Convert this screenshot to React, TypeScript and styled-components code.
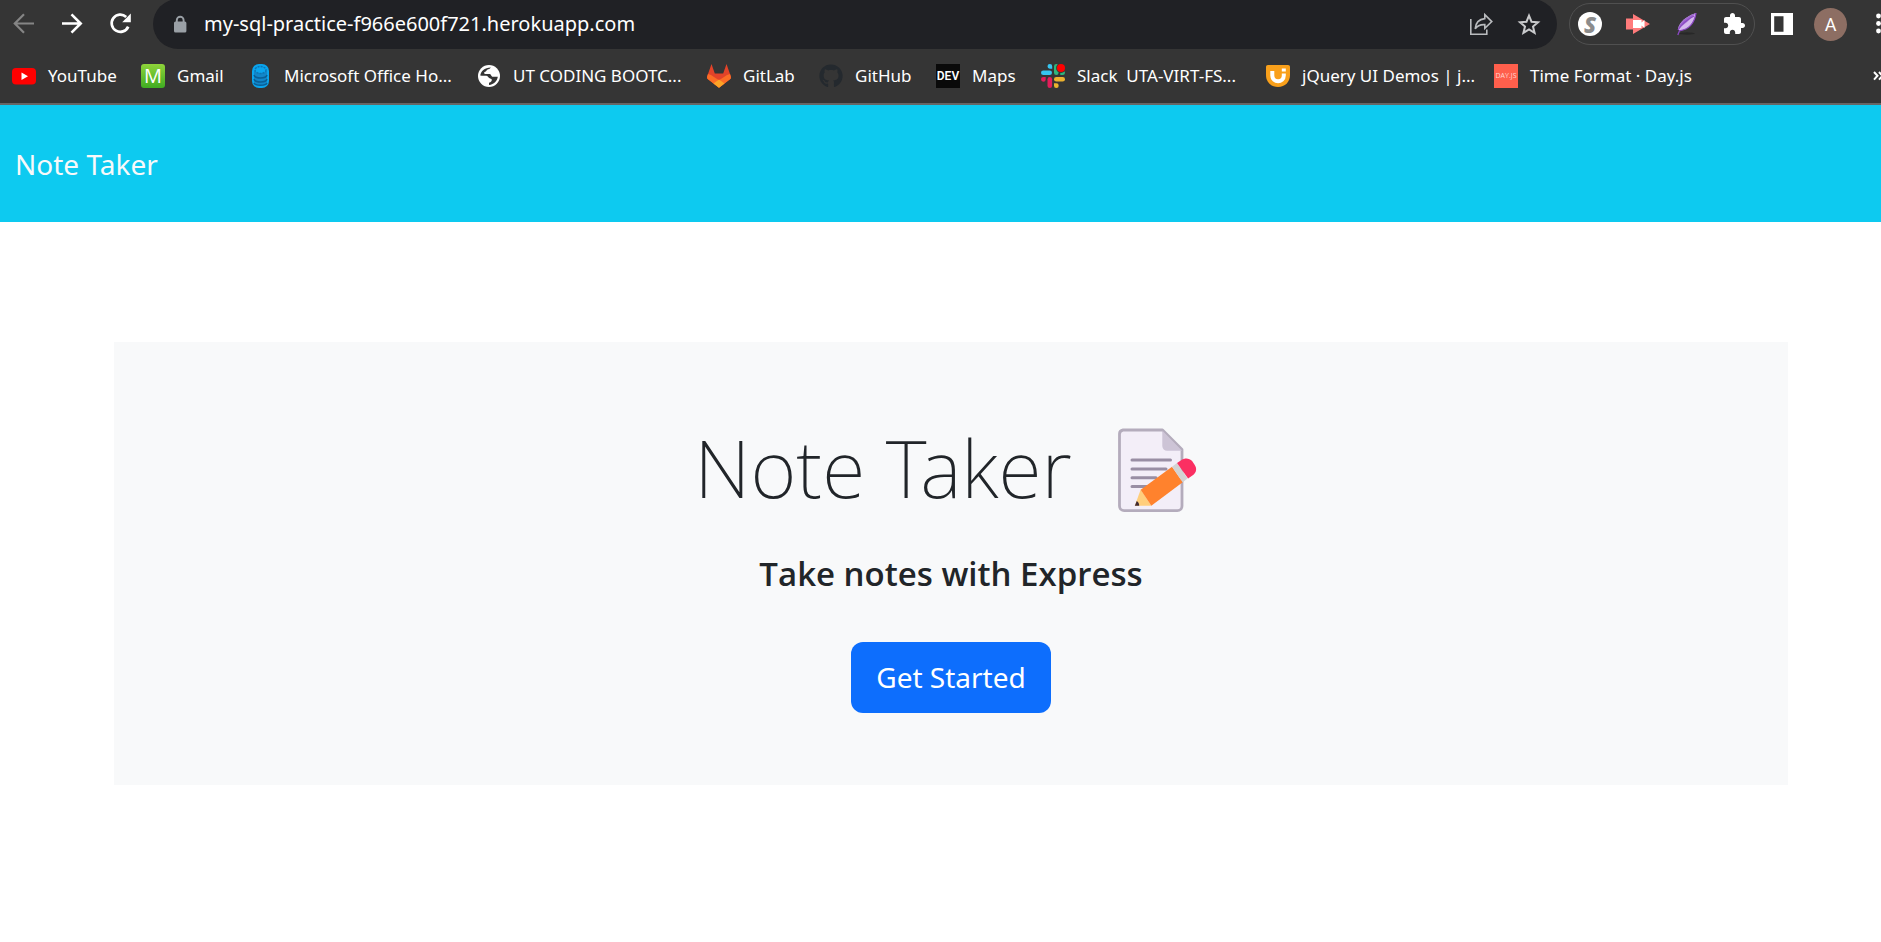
import React from 'react';
import styled, { createGlobalStyle } from 'styled-components';
import { FaGithub } from 'react-icons/fa';

const GlobalStyle = createGlobalStyle`
  *, *::before, *::after { box-sizing: border-box; }
  body {
    margin: 0;
    background: #fff;
    color: #212529;
    font-family: 'Noto Sans', 'Open Sans', sans-serif;
    overflow-x: hidden;
  }
  h1, h2, ul { margin: 0; padding: 0; }
  svg { display: block; }
`;

/* ---------- browser chrome ---------- */

const Chrome = styled.header`
  background: #353535;
  border-bottom: 2px solid #666;
  color: #fff;
  overflow: hidden;
`;

const Toolbar = styled.div`
  display: flex;
  align-items: center;
  height: 48px;
  padding-left: 12px;
`;

const IconButton = styled.button<{ $color?: string }>`
  flex: none;
  width: 24px;
  height: 24px;
  padding: 0;
  border: 0;
  background: none;
  color: ${(p) => p.$color ?? '#fff'};
  cursor: pointer;
`;

const NavButtons = styled.div`
  display: flex;
  flex: none;
  gap: 24px;
  margin-right: 21px;
`;

const AddressBar = styled.div`
  display: flex;
  flex: 1;
  align-items: center;
  min-width: 0;
  height: 50px;
  margin-right: 12px;
  padding: 0 16px 0 15px;
  border-radius: 25px;
  background: #202125;
`;

const UrlInput = styled.input`
  flex: 1;
  min-width: 0;
  margin: 0 12px;
  padding: 0;
  border: 0;
  outline: 0;
  background: none;
  color: #fff;
  font: 400 20px/28px 'Noto Sans', sans-serif;
`;

const AddressActions = styled.div`
  display: flex;
  gap: 24px;
`;

const Extensions = styled.div`
  display: flex;
  flex: none;
  align-items: center;
  gap: 24px;
  height: 42px;
  margin-right: 15px;
  padding: 0 8px;
  border: 1px solid #505050;
  border-radius: 21px;
`;

const Avatar = styled.button`
  flex: none;
  width: 33px;
  height: 33px;
  margin: 0 26px 0 20px;
  padding: 0;
  border: 0;
  border-radius: 50%;
  background: #8d6e63;
  color: #fff;
  font: 400 18px/33px Roboto, sans-serif;
`;

const MenuButton = styled.button`
  flex: none;
  width: 8px;
  height: 24px;
  padding: 0;
  border: 0;
  background: none;
  color: #fff;
`;

const BookmarkBar = styled.nav`
  display: flex;
  align-items: center;
  justify-content: space-between;
  height: 55px;
  padding-left: 12px;
`;

const BookmarkList = styled.ul`
  display: flex;
  flex: 1;
  gap: 24px;
  min-width: 0;
  list-style: none;
`;

const Bookmark = styled.a`
  display: flex;
  align-items: center;
  gap: 12px;
  color: #fff;
  font-size: 17px;
  line-height: 24px;
  text-decoration: none;
  white-space: pre;
`;

const BookmarkLabel = styled.span<{ $width: number }>`
  width: ${(p) => p.$width}px;
`;

const MoreButton = styled.button`
  flex: none;
  width: 8px;
  height: 32px;
  padding: 0;
  border: 0;
  background: none;
  color: #fff;
`;

const Tile = styled.span<{ $bg: string; $size: number; $weight?: number; $round?: number; $color?: string }>`
  display: flex;
  align-items: center;
  justify-content: center;
  flex: none;
  width: 24px;
  height: 24px;
  border-radius: ${(p) => p.$round ?? 0}px;
  background: ${(p) => p.$bg};
  color: ${(p) => p.$color ?? '#fff'};
  font: ${(p) => p.$weight ?? 400} ${(p) => p.$size}px/24px 'Open Sans', sans-serif;
`;

const DevTile = styled(Tile)`
  font-family: Roboto, sans-serif;
`;

const StreamTile = styled(Tile)`
  font-style: italic;
`;

/* ---------- page ---------- */

const Navbar = styled.nav`
  display: flex;
  align-items: center;
  height: 117px;
  padding: 0 15px;
  background: #0dcaf0;
`;

const Brand = styled.a`
  color: #f8f9fa;
  font-size: 28px;
  line-height: 40px;
  text-decoration: none;
`;

const Main = styled.main`
  padding: 120px 93px 0 114px;
`;

const Hero = styled.section`
  display: flex;
  flex-direction: column;
  align-items: center;
  padding: 72px 24px;
  background: #f8f9fa;
`;

const Title = styled.h1`
  display: flex;
  align-items: flex-end;
  gap: 36px;
  margin-bottom: 30px;
  font-size: 79px;
  font-weight: 200;
  line-height: 108px;
  white-space: nowrap;
`;

const Subtitle = styled.h2`
  margin-bottom: 46px;
  font: 600 33px/44px 'Open Sans', sans-serif;
`;

const StartButton = styled.button`
  padding: 15px 25px 16px;
  border: 0;
  border-radius: 12px;
  background: #0d6efd;
  color: #fff;
  font: 400 28px/40px 'Noto Sans', sans-serif;
  cursor: pointer;
`;

/* ---------- drawings ---------- */

const Glyph = ({ d }: { d: string }) => (
  <svg width="24" height="24" viewBox="0 0 24 24" fill="currentColor" aria-hidden="true">
    <path d={d} />
  </svg>
);

const BackIcon = () => (
  <svg width="24" height="24" viewBox="0 0 24 24" fill="none" stroke="currentColor" strokeWidth="2.2" aria-hidden="true">
    <path d="M22 11.500H3.500M12 2.300L2.800 11.500l9.200 9.200" />
  </svg>
);
const ForwardIcon = () => (
  <svg width="24" height="24" viewBox="0 0 24 24" fill="none" stroke="currentColor" strokeWidth="2.6" aria-hidden="true">
    <path d="M2 11.500h18M11.5 2.300l9.200 9.200-9.200 9.200" />
  </svg>
);
const ReloadIcon = () => (
  <svg width="24" height="24" viewBox="0 0 24 24" fill="none" aria-hidden="true">
    <path d="M20.2 14.6A8.6 8.6 0 1 1 18.2 5" stroke="currentColor" strokeWidth="2.7" />
    <path d="M22.8 1.6v8.6h-8.6z" fill="currentColor" />
  </svg>
);
const LockIcon = () => (
  <svg width="24" height="24" viewBox="0 0 24 24" aria-hidden="true">
    <rect x="6" y="9.500" width="12.4" height="11" rx="1.5" fill="#9aa0a6" />
    <path d="M8.8 10V8.100a3.400 3.400 0 0 1 6.800 0V10" fill="none" stroke="#9aa0a6" strokeWidth="1.9" />
  </svg>
);
const ShareIcon = () => (
  <svg width="24" height="24" viewBox="0 0 24 24" fill="none" stroke="#b9bbbe" strokeWidth="1.6" aria-hidden="true">
    <path d="M1.8 7v15.200h16V17.400" />
    <path d="M15.800 2.600l7 7-7 6.800v-3.800c-4.300-.2-7.600 1-9.600 4.200.4-5.900 4-9.600 9.600-10.200z" />
  </svg>
);
const StarIcon = () => (
  <svg width="24" height="24" viewBox="0 0 24 24" fill="none" stroke="#c9cacc" strokeWidth="2" aria-hidden="true">
    <path d="M12 3.700l2.500 6 6.500.5-5 4.300 1.600 6.400-5.600-3.400-5.600 3.400L8 14.500l-5-4.300 6.500-.5z" />
  </svg>
);
const CameraArrowIcon = () => (
  <svg width="24" height="24" viewBox="0 0 24 24" aria-hidden="true">
    <path d="M0 6.500h7V2l17 10L7 22v-4.500H0z" fill="#ff7b7b" />
    <path d="M7 8h8.500v2.600L18.500 8v8l-3-2.600V16H7z" fill="#fff" />
  </svg>
);
const FeatherIcon = () => (
  <svg width="24" height="24" viewBox="0 0 24 24" aria-hidden="true">
    <ellipse cx="13" cy="21.500" rx="8" ry="1.200" fill="#242424" opacity=".7" />
    <path d="M22 1C13 4 5.500 9.500 4 17l1.500 1.800C14.500 17.500 20.500 11 22 1z" fill="#d5b8ee" />
    <path d="M22 1C13 4 5.500 9.500 4 17l9-7z" fill="#a06ad0" />
    <path d="M22 1C20.500 11 14.500 17.500 5.500 18.800L3.800 23M4 18C9 10 14 7 20 4" fill="none" stroke="#8b48c4" strokeWidth="1.300" />
  </svg>
);
const PANEL = 'M1 1h22v22H1zM4.200 4.200v15.600h9.300V4.200z';
const PUZZLE =
  'M20.500 11H19V7c0-1.100-.9-2-2-2h-4V3.500C13 2.120 11.880 1 10.500 1S8 2.120 8 3.500V5H4c-1.100 0-1.990.9-1.990 2v3.800H3.500c1.490 0 2.700 1.210 2.700 2.700s-1.210 2.700-2.700 2.700H2V20c0 1.100.9 2 2 2h3.800v-1.500c0-1.490 1.210-2.700 2.700-2.700 1.490 0 2.700 1.210 2.700 2.700V22H17c1.100 0 2-.9 2-2v-4h1.500c1.380 0 2.500-1.120 2.500-2.500S21.880 11 20.500 11z';

const YouTubeIcon = () => (
  <svg width="24" height="24" viewBox="0 0 24 24" aria-hidden="true">
    <rect y="4" width="24" height="16.500" rx="4" fill="#f00" />
    <path d="M9.500 8.500v7.500l6.500-3.700z" fill="#fff" />
  </svg>
);
const DatabaseIcon = () => (
  <svg width="24" height="24" viewBox="0 0 24 24" aria-hidden="true">
    <rect x="4" y="0" width="17" height="24" rx="7" fill="#0aa5ee" />
    <path d="M6 6v12c0 5 13 5 13 0V6c0 4-13 4-13 0z" fill="#1286c9" />
    <path d="M6 11c1 4 12 4 13 0M6 15c1 4 12 4 13 0M6 19c1 3 12 3 13 0" fill="none" stroke="#0a5f96" strokeWidth="1.500" />
    <ellipse cx="12.500" cy="6" rx="5.500" ry="3.500" fill="none" stroke="#0d76b4" strokeWidth="1.500" strokeDasharray="2 1" />
  </svg>
);
const GlobeIcon = () => (
  <svg width="24" height="24" viewBox="0 0 24 24" aria-hidden="true">
    <circle cx="12" cy="12" r="11" fill="#fff" />
    <path d="M14 3.500c-1 .6-1 1.500-2.800 1.800-1.800.2-1.500 2-3 2.400-1.700.4-1.200 2.300.4 2.300h3.600c2.600 0 1.600 2.800 3.800 2.800h4.800C20.300 17 17 20.500 12 21v-2.200c2-.6 3-1.900 2.800-3-.3-1.400-1.400-1-2.600-1.800-1.400-.9-1.400-2.200-3-2.200H3.300C3.500 7.500 7.500 3.500 14 3.500z" fill="#353535" />
    <path d="M3 11.800c3 .2 5 1.500 6 3.500.8 1.500 3 1 2.800 3.500l.2 3C7 21.500 3 18 3 11.800z" fill="#fff" />
  </svg>
);
const GitLabIcon = () => (
  <svg width="24" height="24" viewBox="0 0 24 24" aria-hidden="true">
    <path d="M4.500 0L1 10l-1 3.500c0 .7.300 1.200.8 1.600L12 23.800l11.200-8.700c.5-.4.800-.9.800-1.600L23 10 19.500 0l-3.300 9.500H7.800z" fill="#e24329" />
    <path d="M1 10c-.6 1.500-1.500 3.700-.4 4.900L12 23.800l11.400-8.900c1.100-1.200.2-3.400-.4-4.900-2 .4-4 1.400-6 3L12 16.300 7 13c-2-1.600-4-2.600-6-3z" fill="#fc6d26" />
    <path d="M6.500 19.500L12 15.500l5.500 4L12 23.800z" fill="#fca326" />
  </svg>
);
const SlackIcon = () => (
  <svg width="24" height="24" viewBox="0 0 24 24" aria-hidden="true">
    <g fill="#36c5f0"><rect y="6.500" width="11" height="4.600" rx="2.300" /><path d="M11.200 4.700H8.900a2.350 2.350 0 1 1 2.300-2.300z" /></g>
    <g fill="#2eb67d"><rect x="13" width="4.600" height="11" rx="2.300" /><path d="M19.300 11V8.800a2.350 2.350 0 1 1 2.300 2.200z" /></g>
    <g fill="#ecb22e"><rect x="13" y="13" width="11" height="4.600" rx="2.300" /><path d="M13 19.300h2.300a2.350 2.350 0 1 1-2.300 2.300z" /></g>
    <g fill="#e01e5a"><rect x="6.500" y="13" width="4.600" height="11" rx="2.300" /><path d="M4.700 13v2.300A2.350 2.350 0 1 1 2.400 13z" /></g>
    <circle cx="20" cy="4" r="4.900" fill="#353535" />
    <circle cx="20" cy="4" r="4" fill="red" />
  </svg>
);
const JQueryUiIcon = () => (
  <svg width="24" height="24" viewBox="0 0 24 24" aria-hidden="true">
    <path d="M2 1h20c1.300 0 2 .7 2 2v8c0 7-5 12-12 12S0 18 0 11V3c0-1.300.7-2 2-2z" fill="#f9a01b" />
    <path d="M6.300 7v4.500c0 7.500 11.500 7.500 11.500 0V9.500" fill="none" stroke="#fff" strokeWidth="4" />
    <rect x="15.800" y="4.500" width="4" height="3" fill="#fff" />
  </svg>
);
const MoreIcon = () => (
  <svg width="8" height="32" viewBox="0 0 8 32" fill="none" stroke="#fff" strokeWidth="2" aria-hidden="true">
    <path d="M1 12l3.500 3.800L1 19.600M6 12l3.500 3.800L6 19.600" />
  </svg>
);
const MenuIcon = () => (
  <svg width="8" height="24" viewBox="0 0 8 24" fill="currentColor" aria-hidden="true">
    <circle cx="5.500" cy="4" r="2.400" /><circle cx="5.500" cy="11.500" r="2.400" /><circle cx="5.500" cy="19" r="2.400" />
  </svg>
);
const MemoIcon = () => (
  <svg width="100" height="100" viewBox="0 0 100 100" aria-hidden="true">
    <path d="M15 8h39.500L74 27.500V84a4.700 4.700 0 0 1-4.700 4.700H16.200A4.700 4.700 0 0 1 11.500 84V12.200A4.200 4.200 0 0 1 15 8z" fill="#f3eef8" stroke="#b4acbc" strokeWidth="2.800" strokeLinejoin="round" />
    <path d="M54.300 8.500V24a4.800 4.800 0 0 0 4.800 4.800H74z" fill="#cdc4d6" />
    <path d="M24 38h38.500M24 47h34M24 55.700h24M24 64.500h16" stroke="#998ea4" strokeWidth="3" strokeLinecap="round" />
    <path d="M32.700 67.500L26.800 83.800H43.300z" fill="#ffce7c" />
    <path d="M28.800 79l-2 4.800h4.400c0-2-.8-3.800-2.400-4.800z" fill="#402a32" />
    <path d="M32.700 67.700L64 44.700l10.700 15.600-31.400 23.500z" fill="#ff822d" />
    <path d="M64 44.700l5-3.600 10.500 15.500-4.800 3.700z" fill="#d3d3d3" />
    <path d="M69 41.100l4.500-3.200c3.600-2.400 8-1.900 10.600 1.200l2.500 3.700c2.600 3.700 1.800 7.800-1.500 10.200l-5 3.600z" fill="#fb2f62" />
  </svg>
);

const bookmarks = [
  { label: 'YouTube', width: 69, icon: <YouTubeIcon /> },
  { label: 'Gmail', width: 47, icon: <Tile $bg="linear-gradient(#8fd43a, #3fac22)" $size={20} $round={3}>M</Tile> },
  { label: 'Microsoft Office Ho...', width: 169, icon: <DatabaseIcon /> },
  { label: 'UT CODING BOOTC...', width: 170, icon: <GlobeIcon /> },
  { label: 'GitLab', width: 52, icon: <GitLabIcon /> },
  { label: 'GitHub', width: 57, icon: <FaGithub size={24} color="#24292e" /> },
  { label: 'Maps', width: 45, icon: <DevTile $bg="#0a0a0a" $size={12} $weight={600}>DEV</DevTile> },
  { label: 'Slack  UTA-VIRT-FS...', width: 165, icon: <SlackIcon /> },
  { label: 'jQuery UI Demos | j...', width: 168, icon: <JQueryUiIcon /> },
  { label: 'Time Format · Day.js', width: 164, icon: <Tile $bg="#ff5f4c" $size={7} $color="#ffd5cf">DAY.JS</Tile> },
];

export default function App() {
  return (
    <>
      <GlobalStyle />
      <Chrome>
        <Toolbar>
          <NavButtons>
            <IconButton aria-label="Back" $color="#858585"><BackIcon /></IconButton>
            <IconButton aria-label="Forward"><ForwardIcon /></IconButton>
            <IconButton aria-label="Reload"><ReloadIcon /></IconButton>
          </NavButtons>
          <AddressBar>
            <LockIcon />
            <UrlInput type="text" aria-label="Address" defaultValue="my-sql-practice-f966e600f721.herokuapp.com" />
            <AddressActions>
              <IconButton aria-label="Share"><ShareIcon /></IconButton>
              <IconButton aria-label="Bookmark this page"><StarIcon /></IconButton>
            </AddressActions>
          </AddressBar>
          <Extensions>
            <IconButton aria-label="S extension">
              <StreamTile $bg="#fff" $size={22} $weight={800} $round={12} $color="#8c8c8c">S</StreamTile>
            </IconButton>
            <IconButton aria-label="Screen recorder"><CameraArrowIcon /></IconButton>
            <IconButton aria-label="Feather extension"><FeatherIcon /></IconButton>
            <IconButton aria-label="Extensions"><Glyph d={PUZZLE} /></IconButton>
          </Extensions>
          <IconButton aria-label="Side panel"><Glyph d={PANEL} /></IconButton>
          <Avatar aria-label="Profile">A</Avatar>
          <MenuButton aria-label="Menu"><MenuIcon /></MenuButton>
        </Toolbar>
        <BookmarkBar aria-label="Bookmarks">
          <BookmarkList>
            {bookmarks.map((b) => (
              <li key={b.label}>
                <Bookmark href="#">
                  {b.icon}
                  <BookmarkLabel $width={b.width}>{b.label}</BookmarkLabel>
                </Bookmark>
              </li>
            ))}
          </BookmarkList>
          <MoreButton aria-label="More bookmarks"><MoreIcon /></MoreButton>
        </BookmarkBar>
      </Chrome>
      <Navbar>
        <Brand href="/">Note Taker</Brand>
      </Navbar>
      <Main>
        <Hero>
          <Title>
            <span>Note Taker</span>
            <MemoIcon />
          </Title>
          <Subtitle>Take notes with Express</Subtitle>
          <StartButton type="button">Get Started</StartButton>
        </Hero>
      </Main>
    </>
  );
}
